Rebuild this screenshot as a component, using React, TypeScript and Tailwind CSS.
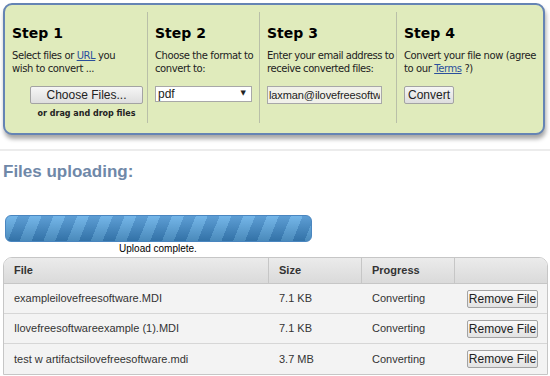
import { useState } from 'react'

const files = [
  { name: 'exampleilovefreesoftware.MDI', size: '7.1 KB' },
  { name: 'Ilovefreesoftwareexample (1).MDI', size: '7.1 KB' },
  { name: 'test w artifactsilovefreesoftware.mdi', size: '3.7 MB' },
]

export default function App() {
  const [format, setFormat] = useState('pdf')
  const [email, setEmail] = useState('laxman@ilovefreesoftware.com')

  return (
    <div className="w-[550px] h-[376px] overflow-hidden bg-white font-['Liberation_Sans',Arial,sans-serif] text-[#222]">
      {/* steps panel */}
      <div className="pt-[3px] pl-[3px] pr-[5px]">
        <div className="h-[132px] flex rounded-[9px] border-2 border-[#6584b4] bg-[#e0ebbc] pt-[7px] pb-[10px] shadow-[1px_4px_4px_rgba(0,0,0,0.35)] font-['DejaVu_Sans',Verdana,sans-serif]">
          <div className="w-[143px] border-r border-[#b9bfa8] pl-[7px] pt-[13px]">
            <h2 className="text-[14px] leading-[17px] font-bold text-black">Step 1</h2>
            <p className="mt-[7px] text-[10px] leading-[13px] tracking-[-0.4px] whitespace-nowrap">
              Select files or <a className="underline text-[#2a4f9c]" href="#">URL</a> you
              <br />
              wish to convert ...
            </p>
            <div className="mt-[11px] flex flex-col items-center pl-[16px] pr-[2px]">
              <button className="w-[113px] h-[18px] border border-[#a3a3a3] rounded-[2px] bg-[linear-gradient(#f6f6f6,#dedede)] text-[12px] leading-none font-['Liberation_Sans',Arial,sans-serif] text-[#222]">
                Choose Files...
              </button>
              <span className="mt-[4px] text-[8px] font-bold">or drag and drop files</span>
            </div>
          </div>
          <div className="w-[112px] border-r border-[#b9bfa8] pl-[7px] pt-[13px]">
            <h2 className="text-[14px] leading-[17px] font-bold text-black">Step 2</h2>
            <p className="mt-[7px] text-[10px] leading-[13px] tracking-[-0.4px] whitespace-nowrap">
              Choose the format to
              <br />
              convert to:
            </p>
            <div className="mt-[11px] relative w-[97px] h-[16px] border border-[#a8a8a8] bg-white">
              <select
                value={format}
                onChange={(e) => setFormat(e.target.value)}
                className="block w-full h-[14px] appearance-none bg-transparent py-0 pl-[2px] text-[12px] leading-[14px] font-['Liberation_Sans',Arial,sans-serif] outline-none"
              >
                <option value="pdf">pdf</option>
                <option value="doc">doc</option>
              </select>
              <span className="absolute right-[5px] top-[3px] text-[7px] leading-none pointer-events-none">▼</span>
            </div>
          </div>
          <div className="w-[137px] border-r border-[#b9bfa8] pl-[7px] pt-[13px]">
            <h2 className="text-[14px] leading-[17px] font-bold text-black">Step 3</h2>
            <p className="mt-[7px] text-[10px] leading-[13px] tracking-[-0.45px] whitespace-nowrap">
              Enter your email address to
              <br />
              receive converted files:
            </p>
            <input
              value={email}
              onChange={(e) => setEmail(e.target.value)}
              className="mt-[11px] w-[115px] h-[18px] border border-[#a8a8a8] bg-[#f1f1ea] px-[1px] text-[11px] tracking-[-0.1px] font-['Liberation_Sans',Arial,sans-serif] outline-none"
            />
          </div>
          <div className="flex-1 pl-[7px] pt-[13px]">
            <h2 className="text-[14px] leading-[17px] font-bold text-black">Step 4</h2>
            <p className="mt-[7px] text-[10px] leading-[13px] tracking-[-0.4px] whitespace-nowrap">
              Convert your file now (agree
              <br />
              to our <a className="underline text-[#2a4f9c]" href="#">Terms</a> ?)
            </p>
            <button className="mt-[11px] w-[50px] h-[18px] border border-[#a3a3a3] rounded-[2px] bg-[linear-gradient(#f6f6f6,#dedede)] text-[12px] leading-none font-['Liberation_Sans',Arial,sans-serif] text-[#222]">
              Convert
            </button>
          </div>
        </div>
      </div>

      <div className="mt-[14px] h-[2px] bg-[#ececec]" />

      <h1 className="mt-[11px] pl-[3px] text-[17px] leading-[20px] font-bold text-[#6f88a8]">Files uploading:</h1>

      {/* progress */}
      <div className="mt-[33px] pl-[3px] w-[313px] flex flex-col items-center">
        <div className="w-[307px] h-[27px] rounded-[6px] border border-[#4a86c0] bg-[image:linear-gradient(rgba(255,255,255,0.16),rgba(0,0,0,0.18)),repeating-linear-gradient(112deg,#5aa8e4_0px,#5aa8e4_11px,#3e8bcc_11px,#3e8bcc_22px)]" />
        <span className="mt-[1px] text-[10px] leading-[12px] text-black">Upload complete.</span>
      </div>

      {/* table */}
      <div className="mt-[2px] ml-[3px] mr-[2px] rounded-t-[9px] border border-[#c6c6c6] overflow-hidden text-[11px] text-[#333]">
        <div className="flex h-[26px] items-center bg-[linear-gradient(#ebebeb,#dadada)] border-b border-[#c6c6c6] font-bold">
          <div className="w-[265px] pl-[10px] h-full flex items-center border-r border-[#c6c6c6]">File</div>
          <div className="w-[93px] pl-[10px] h-full flex items-center border-r border-[#c6c6c6]">Size</div>
          <div className="w-[93px] pl-[10px] h-full flex items-center border-r border-[#c6c6c6]">Progress</div>
          <div className="flex-1" />
        </div>
        {files.map((f, i) => (
          <div key={i} className="flex h-[30px] items-center bg-[#f3f3f3] border-b border-[#d6d6d6] last:border-b-0">
            <div className="w-[265px] pl-[10px]">{f.name}</div>
            <div className="w-[93px] pl-[10px]">{f.size}</div>
            <div className="w-[93px] pl-[10px]">Converting</div>
            <div className="flex-1 flex justify-end pr-[9px]">
              <button className="w-[71px] h-[18px] border border-[#a3a3a3] rounded-[2px] bg-[linear-gradient(#fafafa,#e2e2e2)] text-[12px] leading-none text-[#222]">
                Remove File
              </button>
            </div>
          </div>
        ))}
      </div>
    </div>
  )
}
